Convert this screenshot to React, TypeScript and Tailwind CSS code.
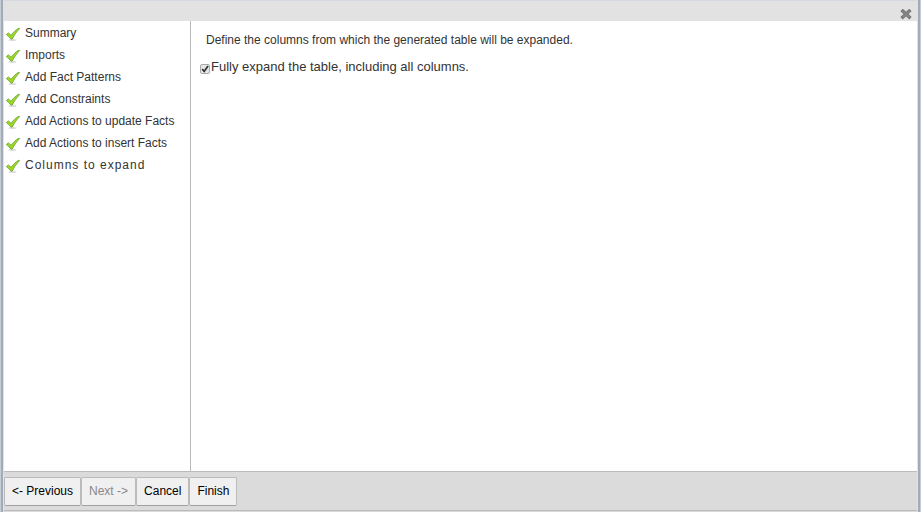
import { useState } from "react";

const steps = [
  "Summary",
  "Imports",
  "Add Fact Patterns",
  "Add Constraints",
  "Add Actions to update Facts",
  "Add Actions to insert Facts",
  "Columns to expand",
];

function TickIcon() {
  return (
    <svg className="size-4 shrink-0" viewBox="0 0 16 16" aria-hidden="true">
      <defs>
        <linearGradient id="tick" x1="0" y1="0" x2="0" y2="1">
          <stop offset="0" stopColor="#a5d83a" />
          <stop offset="1" stopColor="#9ad81c" />
        </linearGradient>
      </defs>
      <ellipse cx="7.5" cy="15" rx="4" ry="0.9" fill="#000" opacity="0.15" />
      <path
        d="M1.3 9.6 L3.4 7.9 L6 10.3 C8 7.6 10.6 5 14 3 L14.6 3.6 C11.8 6.6 9.4 9.8 7.2 14 L5.9 14 C4.6 12.4 3 10.9 1.3 9.6 Z"
        fill="url(#tick)"
        stroke="#66a122"
        strokeWidth="0.8"
        strokeLinejoin="round"
      />
    </svg>
  );
}

function CloseIcon() {
  return (
    <svg className="size-3" viewBox="0 0 12 12" aria-hidden="true">
      <path d="M2.8 2.1 L9.2 8.1 M9.2 2.1 L2.8 8.1" stroke="#747474" strokeWidth="3.4" strokeLinecap="square" strokeLinejoin="round" />
      <path d="M3 2.3 L9 7.9 M9 2.3 L3 7.9" stroke="#878787" strokeWidth="1.8" strokeLinecap="round" />
    </svg>
  );
}

function WizardButton({ label, disabled = false }: { label: string; disabled?: boolean }) {
  return (
    <button
      type="button"
      disabled={disabled}
      className="h-[29px] rounded-xs border border-[#bbb] border-b-[#a0a0a0] bg-[#f0f0f0] px-[7px] pb-0.5 text-xs whitespace-nowrap text-black disabled:text-[#888]"
    >
      {label}
    </button>
  );
}

export default function App() {
  const [expanded, setExpanded] = useState(true);

  return (
    <div className="flex min-h-screen border-x border-[#c5ced6] font-['Liberation_Sans',Arial,sans-serif] text-xs text-[#333]">
      <div className="flex min-w-0 flex-1 flex-col border-x-2 border-[#a3acb6] bg-[#e2e2e2] px-px">
        <header className="flex h-[21px] items-end justify-end border-t border-[#d5dae0] bg-[#e2e2e2] pr-[5px]">
          <button type="button" aria-label="Close">
            <CloseIcon />
          </button>
        </header>

        <div className="flex flex-1 bg-white">
          <nav className="w-[187px] shrink-0 border-r border-[#bbb] pt-px pl-px">
            <ul>
              {steps.map((step, index) => (
                <li key={step}>
                  <a
                    href="#"
                    className={
                      index === steps.length - 1
                        ? "flex h-[22px] items-center gap-1 tracking-[1px]"
                        : "flex h-[22px] items-center gap-1"
                    }
                  >
                    <TickIcon />
                    {step}
                  </a>
                </li>
              ))}
            </ul>
          </nav>

          <main className="flex flex-1 flex-col gap-2.5 px-2 pt-2.5">
            <p className="px-[7px] leading-[18px]">Define the columns from which the generated table will be expanded.</p>
            <label className="flex items-end text-[13px] leading-4">
              <span className="relative grid size-3 shrink-0 place-items-center">
                <input
                  type="checkbox"
                  checked={expanded}
                  onChange={(event) => setExpanded(event.target.checked)}
                  className="peer size-[10px] appearance-none rounded-xs border border-[#aaa] bg-[#e8e8e8]"
                />
                <svg
                  className="pointer-events-none absolute size-[10px] opacity-0 peer-checked:opacity-100"
                  viewBox="0 0 10 10"
                  aria-hidden="true"
                >
                  <path d="M2.2 5.2 L4.2 7.4 L8 2" fill="none" stroke="#333" strokeWidth="1.8" />
                </svg>
              </span>
              Fully expand the table, including all columns.
            </label>
          </main>
        </div>

        <footer className="border-t border-[#bbb] bg-[#dbdbdb] pt-[5px] pb-px">
          <div className="flex border-b border-[#bbb] pb-1">
            <WizardButton label="<- Previous" />
            <WizardButton label="Next ->" disabled />
            <WizardButton label="Cancel" />
            <WizardButton label="Finish" />
          </div>
        </footer>
      </div>
    </div>
  );
}
